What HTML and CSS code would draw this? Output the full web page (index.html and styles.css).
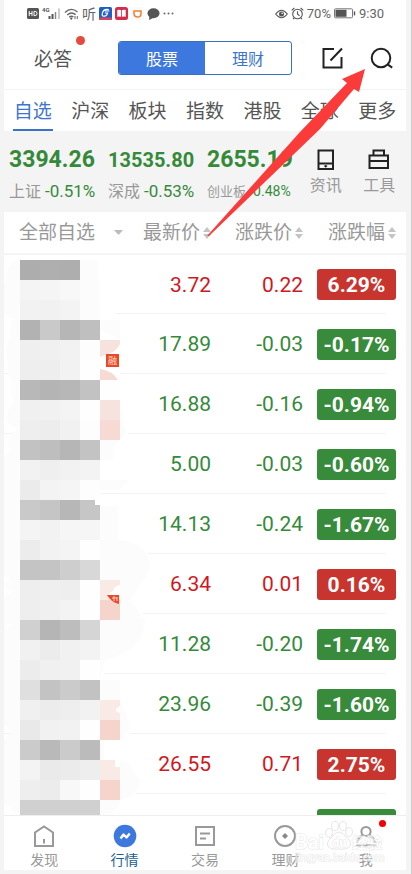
FILE: index.html
```html
<!DOCTYPE html>
<html lang="zh-CN">
<head>
  <meta charset="UTF-8">
  <meta name="viewport" content="width=device-width, initial-scale=1.0">
  <title>行情 - 自选</title>
  <link rel="stylesheet" href="styles.css">
</head>
<body>
<div class="phone">

  <div class="status-bar">
    <div class="status-group">
      <svg width="12" height="11" viewBox="0 0 12 11"><rect width="12" height="11" rx="1.5" fill="#555"/><path d="M2.2 3v5M5 3v5M2.2 5.5H5M7 3.4v4.2h1.2q1.8 0 1.8-2.1T8.2 3.4Z" fill="none" stroke="#fff" stroke-width="1"/></svg>
      <svg class="signal" width="19" height="13" viewBox="0 0 19 13"><text x="0" y="5" class="net">4G</text><path d="M7.5 12V9M10.5 12V7" stroke="#555" stroke-width="2"/><path d="M13.5 12V5" stroke="#888" stroke-width="1.5"/><path d="M17 12V1.5" stroke="#ccc" stroke-width="2"/></svg>
      <svg width="15" height="12" viewBox="0 0 15 12"><g fill="none" stroke="#666" stroke-width="1.4"><path d="M1 4.5Q7-1.5 13.5 4"/><path d="M3.2 7Q7.5 3 11.6 6.6"/><path d="M5.2 9.2Q7.4 7.2 9.4 9"/></g><circle cx="7.3" cy="10.6" r="1.1" fill="#555"/><path d="M11 11V8M13.3 11V8" stroke="#666"/></svg>
      <span class="listen">听</span>
      <svg width="13" height="13" viewBox="0 0 13 13"><rect width="13" height="13" rx="1.5" fill="#1f5fc4"/><path d="M9.8 2.6Q5 1.4 3.6 5.4T5 9.2Q8 9.4 8.6 6H5.8M5.8 4h4.6" fill="none" stroke="#fff" stroke-width="1.2"/><rect y="10.6" width="13" height="2.4" rx="1" fill="#d4465a"/></svg>
      <svg width="13" height="13" viewBox="0 0 13 13"><rect width="13" height="13" rx="2.5" fill="#d52c4c"/><path d="M2.3 3q2.2-.7 3.8.2v6.6q-1.8-.7-3.8-.1ZM10.7 3q-2.2-.7-3.8.2v6.6q1.8-.7 3.8-.1Z" fill="#fff"/></svg>
      <svg width="13" height="13" viewBox="0 0 13 13"><rect width="13" height="13" rx="2" fill="#fafafa"/><path d="M3 4h7v2.4Q10 10 6.6 10T3 6.6Z" fill="none" stroke="#f08030" stroke-width="1.5"/></svg>
      <svg width="13" height="12" viewBox="0 0 13 12"><ellipse cx="6.5" cy="5.3" rx="6" ry="5" fill="#555"/><path d="M2.5 8 2 12l4-2Z" fill="#555"/></svg>
      <svg width="11" height="3" viewBox="0 0 11 3" fill="#666"><circle cx="1.5" cy="1.5" r="1"/><circle cx="5.5" cy="1.5" r="1"/><circle cx="9.5" cy="1.5" r="1"/></svg>
    </div>
    <div class="status-group">
      <svg width="13" height="10" viewBox="0 0 13 10"><path d="M.7 5Q6.5-2.6 12.3 5 6.5 12.6.7 5Z" fill="none" stroke="#555" stroke-width="1.1"/><circle cx="6.5" cy="5" r="2.5" fill="#555"/><circle cx="7.2" cy="4.3" r=".8" fill="#fff"/></svg>
      <svg width="13" height="13" viewBox="0 0 13 13" fill="none" stroke="#555" stroke-width="1.1"><circle cx="6.5" cy="7" r="4.8"/><path d="M6.5 4.2V7l2 1.8M.7 3.4 3.4 1M12.3 3.4 9.6 1M3.2 10.8 2 12.2M9.8 10.8 11 12.2"/></svg>
      <span>70%</span>
      <svg class="battery" width="22" height="11" viewBox="0 0 22 11"><rect x=".5" y=".8" width="18" height="9" rx="1" fill="#fff" stroke="#777"/><rect x="1.5" y="1.8" width="11" height="7" fill="#555"/><path d="M20.5 3.4v4" stroke="#555" stroke-width="1.4"/></svg>
      <span>9:30</span>
    </div>
  </div>

  <header class="top-bar">
    <a href="#answer" class="answer">必答<i class="dot"></i></a>
    <div class="segment">
      <button type="button" class="segment-btn active">股票</button>
      <button type="button" class="segment-btn">理财</button>
    </div>
    <button type="button" class="icon-btn" aria-label="编辑">
      <svg width="22" height="22" viewBox="0 0 22 22" fill="none" stroke="#222" stroke-width="2"><path d="M12 2H1.5v18.5h18V10M8.5 13.5 20 1.5"/></svg>
    </button>
    <button type="button" class="icon-btn" aria-label="搜索">
      <svg width="24" height="22" viewBox="0 0 24 22" fill="none" stroke="#222" stroke-width="2"><circle cx="11" cy="11" r="9.3"/><path d="m17.6 17.4 4.6 3.2"/></svg>
    </button>
  </header>

  <nav class="tabs">
    <a href="#zx" class="active">自选</a>
    <a href="#hs">沪深</a>
    <a href="#bk">板块</a>
    <a href="#zs">指数</a>
    <a href="#gg">港股</a>
    <a href="#qq">全球</a>
    <a href="#gd">更多</a>
  </nav>

  <section class="indices">
    <div class="index">
      <strong>3394.26</strong>
      <p>上证 <span>-0.51%</span></p>
    </div>
    <div class="index medium">
      <strong>13535.80</strong>
      <p>深成 <span>-0.53%</span></p>
    </div>
    <div class="index small">
      <strong>2655.19</strong>
      <p>创业板 <span>-0.48%</span></p>
    </div>
    <a href="#news" class="tool">
      <svg width="18" height="22" viewBox="0 0 18 22" fill="none" stroke="#222" stroke-width="2"><rect x="1.5" y="1.5" width="14.5" height="18.5"/><path d="M1.5 14.5H16"/><path d="M7.2 17.2h3M8.7 16v2.6" stroke-width="1.2"/></svg>
      资讯
    </a>
    <a href="#tools" class="tool">
      <svg width="22" height="22" viewBox="0 0 22 22" fill="none" stroke="#222" stroke-width="2"><path d="M1.5 6.5h18.5v12.5H1.5ZM5.5 6.5v-5H16v5" /><path d="M1.5 12h18.5"/></svg>
      工具
    </a>
  </section>

  <main class="list">
    <table class="stocks">
      <colgroup>
        <col>
        <col class="col-price">
        <col class="col-change">
        <col class="col-percent">
      </colgroup>
      <thead>
        <tr>
          <th><button type="button" class="filter">全部自选<svg width="9" height="5" viewBox="0 0 9 5"><path d="M0 0h9L4.5 5Z" fill="#bbb"/></svg></button></th>
          <th><button type="button">最新价<svg width="8" height="12" viewBox="0 0 8 12"><path d="M0 5h8L4 0ZM0 7h8l-4 5Z" fill="#c4c4c4"/></svg></button></th>
          <th><button type="button">涨跌价<svg width="8" height="12" viewBox="0 0 8 12"><path d="M0 5h8L4 0ZM0 7h8l-4 5Z" fill="#c4c4c4"/></svg></button></th>
          <th><button type="button">涨跌幅<svg width="8" height="12" viewBox="0 0 8 12"><path d="M0 5h8L4 0ZM0 7h8l-4 5Z" fill="#c4c4c4"/></svg></button></th>
        </tr>
      </thead>
      <tbody>
        <tr class="up"><td></td><td>3.72</td><td>0.22</td><td><span class="badge">6.29%</span></td></tr>
        <tr><td></td><td>17.89</td><td>-0.03</td><td><span class="badge">-0.17%</span></td></tr>
        <tr><td></td><td>16.88</td><td>-0.16</td><td><span class="badge">-0.94%</span></td></tr>
        <tr><td></td><td>5.00</td><td>-0.03</td><td><span class="badge">-0.60%</span></td></tr>
        <tr><td></td><td>14.13</td><td>-0.24</td><td><span class="badge">-1.67%</span></td></tr>
        <tr class="up"><td></td><td>6.34</td><td>0.01</td><td><span class="badge">0.16%</span></td></tr>
        <tr><td></td><td>11.28</td><td>-0.20</td><td><span class="badge">-1.74%</span></td></tr>
        <tr><td></td><td>23.96</td><td>-0.39</td><td><span class="badge">-1.60%</span></td></tr>
        <tr class="up"><td></td><td>26.55</td><td>0.71</td><td><span class="badge">2.75%</span></td></tr>
        <tr><td></td><td></td><td></td><td><span class="badge"></span></td></tr>
      </tbody>
    </table>

    <!-- pixelated cover over the stock names -->
    <svg class="mosaic" width="150" height="561" viewBox="0 254 150 561" aria-hidden="true">
      <path fill="#fff" d="M40 300h75v30h-75ZM40 360h72v20H40ZM40 420h88v20H40ZM40 480h60v22H40ZM40 540h108v20H40ZM40 600h103v20H40ZM40 660h65v20H40ZM40 720h90v20H40ZM40 780h96v20H40Z"/>
      <path fill="#fcfcfc" d="M20 260Q5 262 5 282 0 290 0 303 2 318 20 320H12Q10 330 10 338 4 348 8 362 6 375 12 384 10 396 14 402 6 410 7 420 10 428 18 428 4 440 10 450L0 462V580L10 592 0 602V720L12 732 0 742V804L10 806Q14 816 26 815H106Q120 810 120 800 138 796 140 780L126 760H104V740Q130 740 130 724L120 700V680H100L105 660Q145 650 145 620L130 600 150 570Q150 542 118 540V506H100V490H118L130 480H100V460H113Q113 440 126 435L120 400H100V330L120 339V320H100L98 260Z"/>
      <g id="cells"></g>
      <path fill="#fff" d="M120 344q-4 8-12 10l-8 3v12q13 2 18 11h2ZM95 498h6v7h-6ZM120 585q-6 1-7 6l-6 4h13ZM120 706q-4 2-4 4t4 3ZM115 760v7h5v-7ZM4 576l8 2-8 5ZM6 625l9-2-9 8Z"/>
      <rect x="106" y="354" width="13" height="13" fill="#e8492a"/>
      <text x="108" y="364" class="tag">融</text>
      <path d="M107 595h12v9q-8-2-12-9Z" fill="#e8492a"/>
      <path d="M112 598h5M114 596v5M117 597v4" stroke="#ffd0b8"/>
    </svg>
  </main>

  <nav class="bottom-nav">
    <a href="#find">
      <svg width="24" height="24" viewBox="0 0 24 24" fill="none" stroke="#999" stroke-width="2"><path d="M3 22V8.5L12 2.5l9 6V22ZM12 15v4.5"/></svg>
      发现
    </a>
    <a href="#market" class="active">
      <svg width="24" height="24" viewBox="0 0 24 24"><circle cx="12" cy="12" r="11.3" fill="#3d78de"/><path d="m7.5 14.5 3-4 3 3 3.2-4" fill="none" stroke="#fff" stroke-width="2.4" stroke-linejoin="round"/></svg>
      行情
    </a>
    <a href="#trade">
      <svg width="24" height="24" viewBox="0 0 24 24" fill="none" stroke="#999" stroke-width="2"><rect x="3" y="3" width="18" height="18"/><path d="M7 9.5h10M7 14.5h6"/></svg>
      交易
    </a>
    <a href="#wealth">
      <svg width="24" height="24" viewBox="0 0 24 24"><circle cx="12" cy="12" r="10" fill="none" stroke="#999" stroke-width="2"/><path d="M12 9l3 3-3 3-3-3Z" fill="#888"/></svg>
      理财
    </a>
    <a href="#me">
      <svg width="24" height="24" viewBox="0 0 24 24" fill="none" stroke="#999" stroke-width="2"><circle cx="12" cy="7.5" r="4.6"/><path d="M8.5 11.5Q3.5 14 3 18.5M15.5 11.5Q20.5 14 21 18.5M2 21.3h20"/></svg>
      我<i class="dot"></i>
    </a>
    <svg class="watermark" width="92" height="46" viewBox="0 0 92 46" aria-hidden="true">
      <text x="0" y="29" class="brand">Bai</text>
      <g fill="#fff" stroke="#ddd"><ellipse cx="34" cy="13" rx="3.4" ry="4.4"/><ellipse cx="40" cy="6" rx="3.4" ry="4.6"/><ellipse cx="48" cy="6" rx="3.4" ry="4.6"/><ellipse cx="54" cy="12" rx="3.4" ry="4.4"/><path d="M44 12q4 0 8 6 5 4 3 8-2 4-11 3-9 1-11-3-2-4 3-8 4-6 8-6Z"/></g>
      <text x="37" y="27" class="du">du</text>
      <text x="57" y="28" class="exp">经验</text>
      <text x="0" y="41" class="site">jingyan.baidu.com</text>
    </svg>
  </nav>

  <svg class="pointer" width="160" height="170" viewBox="206 68 160 170" aria-hidden="true">
    <path d="M365 69 342 79 347 83 300 132 207 236 209 236 320 129 354 89 359 92Z" fill="#fb3b3a"/>
  </svg>
</div>

<script>
// one string per 20px line: five cells, two hex digits of grey each, "--" is empty, P1-P4 are the pink tags
var lines = [
  'ad af ae -- --', 'f4 f5 f8 -- --', 'f2 f1 f3 -- --',
  'b2 c9 b6 bf --', 'ef f0 f2 fd P1', 'ee ee f2 fe P2',
  'b8 b4 b7 c2 fe', 'f0 f1 f4 fe P1', 'ee ed f1 fd P2',
  'c2 be b6 c3 --', 'f2 ef f2 f3 --', 'eb f3 f5 fd --',
  'c9 c5 b7 c6 --', 'f4 f2 f6 f6 --', 'ec f2 f4 fe --',
  'c4 c4 ce d8 --', 'ee ef ee fe P3', 'ee f0 f3 fe P4',
  'd0 b5 bd d5 --', 'f1 ec f1 f3 --', 'ec f0 f1 fe --',
  'df c3 cb c2 --', 'f0 ec ee f2 P3', 'e9 f1 f2 fe P4',
  'cb b9 cb bb --', 'f3 ea eb ee P3', 'ee ec f8 fe P4',
  'd0 d0 d0 d0 --'
];
var pinks = { P1: '#f7e3dd', P2: '#f8dad4', P3: '#faeae6', P4: '#f5d4cb' };
var cells = document.getElementById('cells');

lines.forEach(function (line, row) {
  line.split(' ').forEach(function (value, col) {
    if (value === '--') return;
    var rect = document.createElementNS('http://www.w3.org/2000/svg', 'rect');
    rect.setAttribute('x', 20 + col * 20);
    rect.setAttribute('y', 260 + row * 20);
    rect.setAttribute('width', 20);
    rect.setAttribute('height', 20);
    rect.setAttribute('fill', pinks[value] || '#' + value + value + value);
    cells.appendChild(rect);
  });
});
</script>
</body>
</html>
```

FILE: styles.css
```css
* {
  box-sizing: border-box;
}

body {
  margin: 0;
  padding: 0 5px 4px 4px;
  height: 100vh;
  border-right: 1px solid #ccc;
  background-color: #f4f4f4;
  font-family: Roboto, "Noto Sans CJK SC", sans-serif;
  color: #555;
}

a {
  color: inherit;
  text-decoration: none;
}

button {
  padding: 0;
  border: none;
  background: none;
  font: inherit;
  color: inherit;
  cursor: pointer;
}

svg {
  display: block;
  flex: none;
}

.phone {
  position: relative;
  display: flex;
  flex-direction: column;
  height: 100%;
  background: #fff;
}

/* status bar */
.status-bar {
  display: flex;
  justify-content: space-between;
  align-items: center;
  height: 27px;
  padding: 0 22px 0 23px;
  font-size: 13px;
  line-height: 20px;
  color: #666;
}

.status-group {
  display: flex;
  align-items: center;
  gap: 3px;
}

.listen {
  font-size: 14px;
}

.net {
  font-size: 6px;
  font-weight: bold;
  fill: #555;
}

/* header */
.top-bar {
  display: flex;
  align-items: center;
  height: 63px;
  padding: 0 12px 0 30px;
  border-bottom: 1px solid #f4f4f4;
}

.answer {
  position: relative;
  margin-right: 46px;
  padding-top: 4px;
  font-size: 19px;
  line-height: 28px;
}

.dot {
  position: absolute;
  border-radius: 50%;
}

.answer .dot {
  top: -6px;
  right: -13px;
  width: 9px;
  height: 9px;
  background: #e64a3c;
}

.segment {
  display: flex;
  flex: 1;
  height: 34px;
  margin-right: 30px;
  border: 1px solid #3a70bd;
  border-radius: 3px;
  overflow: hidden;
}

.segment-btn {
  flex: 1;
  font-size: 16px;
  color: #3d74c8;
}

.segment-btn.active {
  background: #3d78de;
  color: #fff;
}

.icon-btn + .icon-btn {
  margin-left: 26px;
}

/* tabs */
.tabs {
  display: grid;
  grid-template-columns: repeat(7, 1fr);
  justify-items: center;
  height: 41px;
  font-size: 19px;
  line-height: 28px;
}

.tabs a {
  padding: 8px 1px 0;
  white-space: nowrap;
}

.tabs .active {
  border-bottom: 2px solid #3d70c8;
  color: #3d74d0;
}

/* indices */
.indices {
  display: flex;
  height: 81px;
  padding: 14px 0 0 5px;
  background: #f4f4f4;
  color: #999;
}

.index {
  width: 99px;
  flex: none;
  white-space: nowrap;
}

.index strong {
  display: block;
  font-size: 23px;
  line-height: 30px;
  color: #358a3a;
}

.index p {
  margin: 2px 0 0;
  font-size: 16px;
  line-height: 28px;
}

.index span {
  font-size: 17px;
  color: #358a3a;
}

.medium strong {
  font-size: 20px;
}

.index.small {
  width: 92px;
}

.small p,
.small span {
  font-size: 13px;
}

.small span {
  font-size: 14px;
}

.tool {
  display: flex;
  flex: 1;
  flex-direction: column;
  align-items: center;
  gap: 2px;
  padding-top: 4px;
  font-size: 16px;
  line-height: 26px;
}

/* stock table */
.list {
  position: relative;
  flex: 1;
  min-height: 0;
  overflow: hidden;
}

.stocks {
  width: 100%;
  table-layout: fixed;
  border-collapse: collapse;
  text-align: right;
}

.col-price {
  width: 80px;
}

.col-change {
  width: 92px;
}

.col-percent {
  width: 103px;
}

.stocks th,
.stocks td {
  padding: 0;
  white-space: nowrap;
}

.stocks th {
  height: 42px;
  border-bottom: 2px solid #f4f4f4;
  font-size: 19px;
  font-weight: normal;
  color: #999;
}

.stocks th button {
  display: inline-flex;
  align-items: center;
  gap: 3px;
  line-height: 28px;
  vertical-align: middle;
}

.stocks th:first-child {
  padding-left: 15px;
  text-align: left;
}

.stocks th .filter {
  gap: 19px;
}

.stocks th:last-child,
.stocks td:last-child {
  padding-right: 10px;
}

.stocks td {
  height: 60px;
  background: linear-gradient(#f3f3f5, #f3f3f5) left bottom / 100% 1px no-repeat;
  font-size: 21px;
  color: #358a3a;
}

.stocks td:last-child {
  background-size: 83px 1px;
}

.stocks .up td {
  color: #d0181e;
}

.stocks .badge {
  display: block;
  height: 31px;
  margin-left: 14px;
  border-radius: 3px;
  background: #378b3a;
  font-weight: bold;
  line-height: 32px;
  text-align: center;
  color: #fff;
}

.stocks .up .badge {
  background: #c8352e;
}

.mosaic {
  position: absolute;
  top: 42px;
  left: -4px;
}

.tag {
  font-size: 9px;
  fill: #ffe0cc;
}

/* bottom navigation */
.bottom-nav {
  position: relative;
  display: grid;
  grid-template-columns: repeat(5, 1fr);
  height: 55px;
  border-top: 1px solid #eee;
  font-size: 14px;
  line-height: 20px;
  color: #999;
}

.bottom-nav a {
  position: relative;
  display: flex;
  flex-direction: column;
  align-items: center;
  gap: 2px;
  padding-top: 8px;
}

.bottom-nav .active {
  color: #1c5f94;
}

.bottom-nav .dot {
  top: 4px;
  right: 20px;
  width: 7px;
  height: 7px;
  background: #f40000;
}

.watermark {
  position: absolute;
  top: 4px;
  right: 19px;
  opacity: 0.7;
}

.watermark text {
  fill: #fff;
  stroke: #ddd;
  stroke-width: 1px;
  paint-order: stroke;
}

.brand {
  font-size: 20px;
  font-weight: bold;
}

.du {
  font-size: 13px;
  font-weight: bold;
}

.exp {
  font-size: 15px;
  font-weight: bold;
}

.site {
  font-size: 11px;
}

.pointer {
  position: absolute;
  top: 68px;
  right: 40px;
  pointer-events: none;
}
```
